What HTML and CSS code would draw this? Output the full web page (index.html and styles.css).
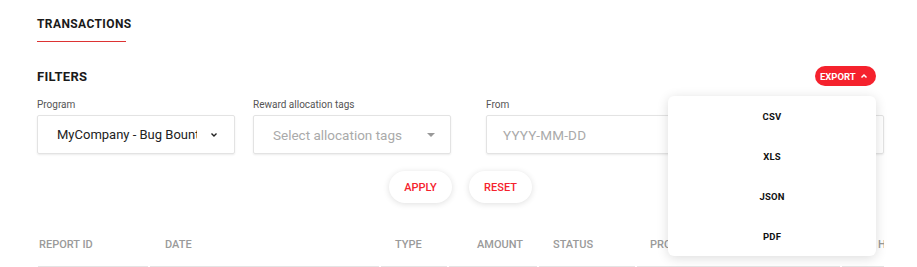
FILE: index.html
```html
<!DOCTYPE html>
<html>
<head>
<meta charset="utf-8">
<link rel="stylesheet" href="styles.css">
</head>
<body>
<div class="page">
  <div class="tabs">
    <div class="tab active">TRANSACTIONS</div>
  </div>

  <div class="filters-head">
    <h2 class="filters-title">FILTERS</h2>
    <div class="export-wrap">
      <button class="export-btn">EXPORT <svg class="caret-up" width="8" height="6" viewBox="0 0 8 6"><path d="M1.5 4.5 L4 2 L6.5 4.5" fill="none" stroke="#fff" stroke-width="1.5"/></svg></button>
      <div class="export-menu">
        <div class="menu-item">CSV</div>
        <div class="menu-item">XLS</div>
        <div class="menu-item">JSON</div>
        <div class="menu-item">PDF</div>
      </div>
    </div>
  </div>

  <div class="fields">
    <div class="field f-program">
      <label class="label">Program</label>
      <div class="input">
        <span class="value">MyCompany - Bug Bounty Program</span>
        <svg class="chev" width="8" height="6" viewBox="0 0 8 6"><path d="M1.5 1.5 L4 4 L6.5 1.5" fill="none" stroke="#222" stroke-width="1.4"/></svg>
      </div>
    </div>
    <div class="field f-tags">
      <label class="label">Reward allocation tags</label>
      <div class="input">
        <span class="placeholder">Select allocation tags</span>
        <svg class="tri" width="10" height="6" viewBox="0 0 10 6"><path d="M1 1 L9 1 L5 5 Z" fill="#999"/></svg>
      </div>
    </div>
    <div class="field f-from">
      <label class="label">From</label>
      <div class="input">
        <span class="placeholder date">YYYY-MM-DD</span>
      </div>
    </div>
  </div>

  <div class="actions">
    <button class="pill">APPLY</button>
    <button class="pill">RESET</button>
  </div>

  <div class="thead">
    <div class="th c1">REPORT ID</div>
    <div class="th c2">DATE</div>
    <div class="th c3">TYPE</div>
    <div class="th c4">AMOUNT</div>
    <div class="th c5">STATUS</div>
    <div class="th c6">PROGRAM</div>
    <div class="th c7">HO</div>
  </div>
</div>
</body>
</html>
```

FILE: styles.css
```css
* { box-sizing: border-box; }
html, body { margin: 0; padding: 0; background: #fff; }
body {
  font-family: Roboto, "Liberation Sans", sans-serif;
  color: #222;
  width: 917px;
  height: 267px;
  overflow: hidden;
}
.page {
  width: 847px;
  margin-left: 37px;
  padding-top: 15px;
}
.tabs { display: flex; }
.tab {
  font-size: 12px;
  font-weight: 700;
  letter-spacing: 0.4px;
  color: #1a1a1a;
  width: 89px;
  height: 27px;
  padding-top: 2px;
  line-height: 14px;
  border-bottom: 1px solid #d33;
}
.filters-head {
  display: flex;
  align-items: center;
  justify-content: space-between;
  margin-top: 24px;
  height: 20px;
  padding-right: 8px;
}
.filters-title {
  margin: 0;
  font-size: 13px;
  font-weight: 700;
  letter-spacing: 0.3px;
  color: #1a1a1a;
}
.export-wrap { position: relative; }
.export-btn {
  display: flex;
  align-items: center;
  gap: 4px;
  height: 20px;
  width: 61px;
  padding: 0 0 0 5px;
  border: none;
  border-radius: 10px;
  background: #f5222d;
  color: #fff;
  font-family: Roboto, "Liberation Sans", sans-serif;
  font-size: 9.5px;
  font-weight: 700;
}
.caret-up { display: block; }
.export-menu {
  position: absolute;
  top: 30px;
  right: 0;
  width: 208px;
  height: 160px;
  background: #fff;
  border-radius: 6px;
  box-shadow: 0 2px 12px rgba(0,0,0,0.14);
  z-index: 5;
  display: flex;
  flex-direction: column;
}
.menu-item {
  height: 40px;
  display: flex;
  align-items: center;
  justify-content: center;
  font-size: 9.5px;
  font-weight: 700;
  color: #111;
  letter-spacing: 0.2px;
}
.fields {
  display: flex;
  margin-top: 13px;
}
.field { display: flex; flex-direction: column; }
.f-program { width: 198px; margin-right: 18px; }
.f-tags { width: 198px; margin-right: 35px; }
.f-from { width: 398px; }
.label {
  font-size: 10px;
  color: #555;
  height: 12px;
  line-height: 12px;
  margin-bottom: 4px;
}
.input {
  height: 39px;
  border: 1px solid #e3e3e3;
  border-radius: 2px;
  box-shadow: 0 1px 2px rgba(0,0,0,0.08);
  display: flex;
  align-items: center;
  padding: 0 14px 0 19px;
  font-size: 13.5px;
}
.value {
  width: 140px;
  font-size: 13px;
  white-space: nowrap;
  overflow: hidden;
  color: #222;
}
.chev { margin-left: auto; margin-right: 2px; }
.placeholder { color: #aaa; }
.tri { margin-left: auto; }
.f-from .input { padding-left: 16px; }
.date { letter-spacing: 0.2px; }
.actions {
  display: flex;
  justify-content: center;
  gap: 17px;
  margin-top: 17px;
}
.pill {
  width: 63px;
  height: 32px;
  border: none;
  border-radius: 16px;
  background: #fff;
  box-shadow: 0 1px 6px rgba(0,0,0,0.13);
  color: #f5222d;
  font-family: Roboto, "Liberation Sans", sans-serif;
  font-size: 11px;
  font-weight: 500;
}
.thead {
  display: flex;
  margin-top: 23px;
  height: 41px;
  overflow: hidden;
  white-space: nowrap;
}
.th {
  flex: none;
  font-size: 11px;
  color: #9a9a9a;
  font-weight: 500;
  padding-top: 12px;
  border-bottom: 1px solid #e4e4e4;
  margin-right: 2px;
}
.c1 { width: 110px; padding-left: 1px; margin-left: 1px; }
.c2 { width: 229px; padding-left: 15px; }
.c3 { width: 66px; padding-left: 14px; }
.c4 { width: 88px; padding-left: 28px; }
.c5 { width: 96px; padding-left: 14px; }
.c6 { width: 203px; padding-left: 13px; }
.c7 { width: 44px; padding-left: 36px; overflow: hidden; }
```
